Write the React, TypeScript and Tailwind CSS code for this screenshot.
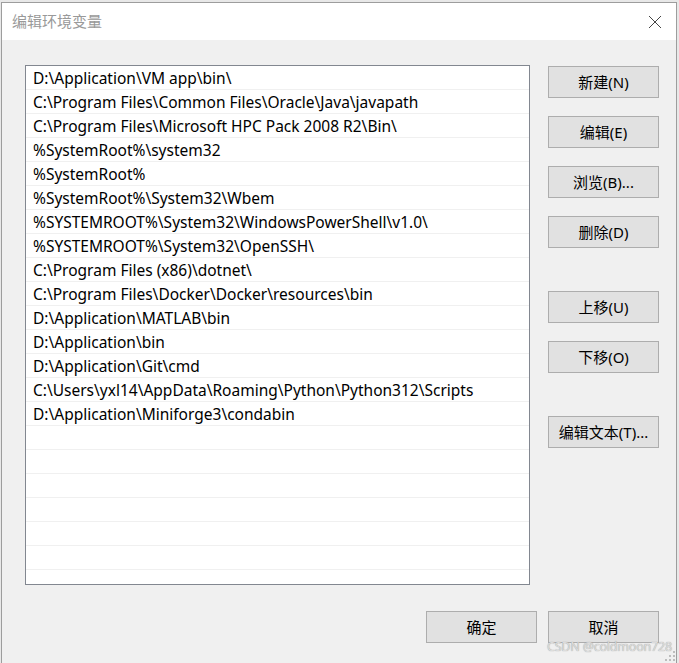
const paths = [
  "D:\\Application\\VM app\\bin\\",
  "C:\\Program Files\\Common Files\\Oracle\\Java\\javapath",
  "C:\\Program Files\\Microsoft HPC Pack 2008 R2\\Bin\\",
  "%SystemRoot%\\system32",
  "%SystemRoot%",
  "%SystemRoot%\\System32\\Wbem",
  "%SYSTEMROOT%\\System32\\WindowsPowerShell\\v1.0\\",
  "%SYSTEMROOT%\\System32\\OpenSSH\\",
  "C:\\Program Files (x86)\\dotnet\\",
  "C:\\Program Files\\Docker\\Docker\\resources\\bin",
  "D:\\Application\\MATLAB\\bin",
  "D:\\Application\\bin",
  "D:\\Application\\Git\\cmd",
  "C:\\Users\\yxl14\\AppData\\Roaming\\Python\\Python312\\Scripts",
  "D:\\Application\\Miniforge3\\condabin",
]

const rows = [...paths, "", "", "", "", "", "", ""]

function Button({ label, className = "" }: { label: string; className?: string }) {
  return (
    <div
      className={`flex h-[32px] w-[111px] items-center justify-center border border-[#adadad] bg-[#e1e1e1] text-[15px] text-black ${className}`}
    >
      {label}
    </div>
  )
}

export default function App() {
  return (
    <div
      className="h-[663px] w-[679px] overflow-hidden bg-[#e8e8e8] pt-[2px] pl-[1px]"
      style={{ fontFamily: '"Noto Sans", "Noto Sans CJK SC", sans-serif' }}
    >
      <div className="relative h-[670px] w-[676px] border border-b-0 border-[#9d9d9d] bg-[#f0f0f0]">
        {/* title bar */}
        <div className="flex h-[37px] items-center justify-between bg-white pl-[10px] pr-[14px]">
          <span className="text-[15px] text-[#999999]">编辑环境变量</span>
          <svg width="14" height="14" viewBox="0 0 14 14" className="text-[#444]">
            <path d="M1 1L13 13M13 1L1 13" stroke="currentColor" strokeWidth="1" fill="none" />
          </svg>
        </div>

        <div className="flex pt-[25px] pl-[23px]">
          {/* list */}
          <div className="h-[520px] w-[505px] overflow-hidden border border-[#828790] bg-white">
            {rows.map((p, i) => (
              <div
                key={i}
                className="flex h-[24px] items-center border-b border-[#f0f0f0] pt-[3px] pl-[7px] text-[15.5px] leading-none whitespace-nowrap text-black"
              >
                {p}
              </div>
            ))}
          </div>

          {/* side buttons */}
          <div className="ml-[18px] flex flex-col pt-[1px]">
            <Button label="新建(N)" />
            <Button label="编辑(E)" className="mt-[18px]" />
            <Button label="浏览(B)..." className="mt-[18px]" />
            <Button label="删除(D)" className="mt-[18px]" />
            <Button label="上移(U)" className="mt-[43px]" />
            <Button label="下移(O)" className="mt-[18px]" />
            <Button label="编辑文本(T)..." className="mt-[43px]" />
          </div>
        </div>

        <div className="flex justify-end gap-[11px] pt-[26px] pr-[17px]">
          <Button label="确定" />
          <Button label="取消" />
        </div>

        {/* watermark */}
        <div
          className="absolute top-[635px] left-[545px] text-[12.5px] tracking-[-0.2px] whitespace-nowrap text-[#dcdcdc]"
          style={{ textShadow: "0 0 1px #8f8f8f" }}
        >
          CSDN @coldmoon728
        </div>
        <svg width="12" height="12" viewBox="0 0 12 12" className="absolute top-[648px] left-[663px]">
          <g fill="#bdbdbd">
            <rect x="8" y="0" width="2" height="2" />
            <rect x="4" y="4" width="2" height="2" />
            <rect x="8" y="4" width="2" height="2" />
            <rect x="0" y="8" width="2" height="2" />
            <rect x="4" y="8" width="2" height="2" />
            <rect x="8" y="8" width="2" height="2" />
          </g>
        </svg>
      </div>
    </div>
  )
}
